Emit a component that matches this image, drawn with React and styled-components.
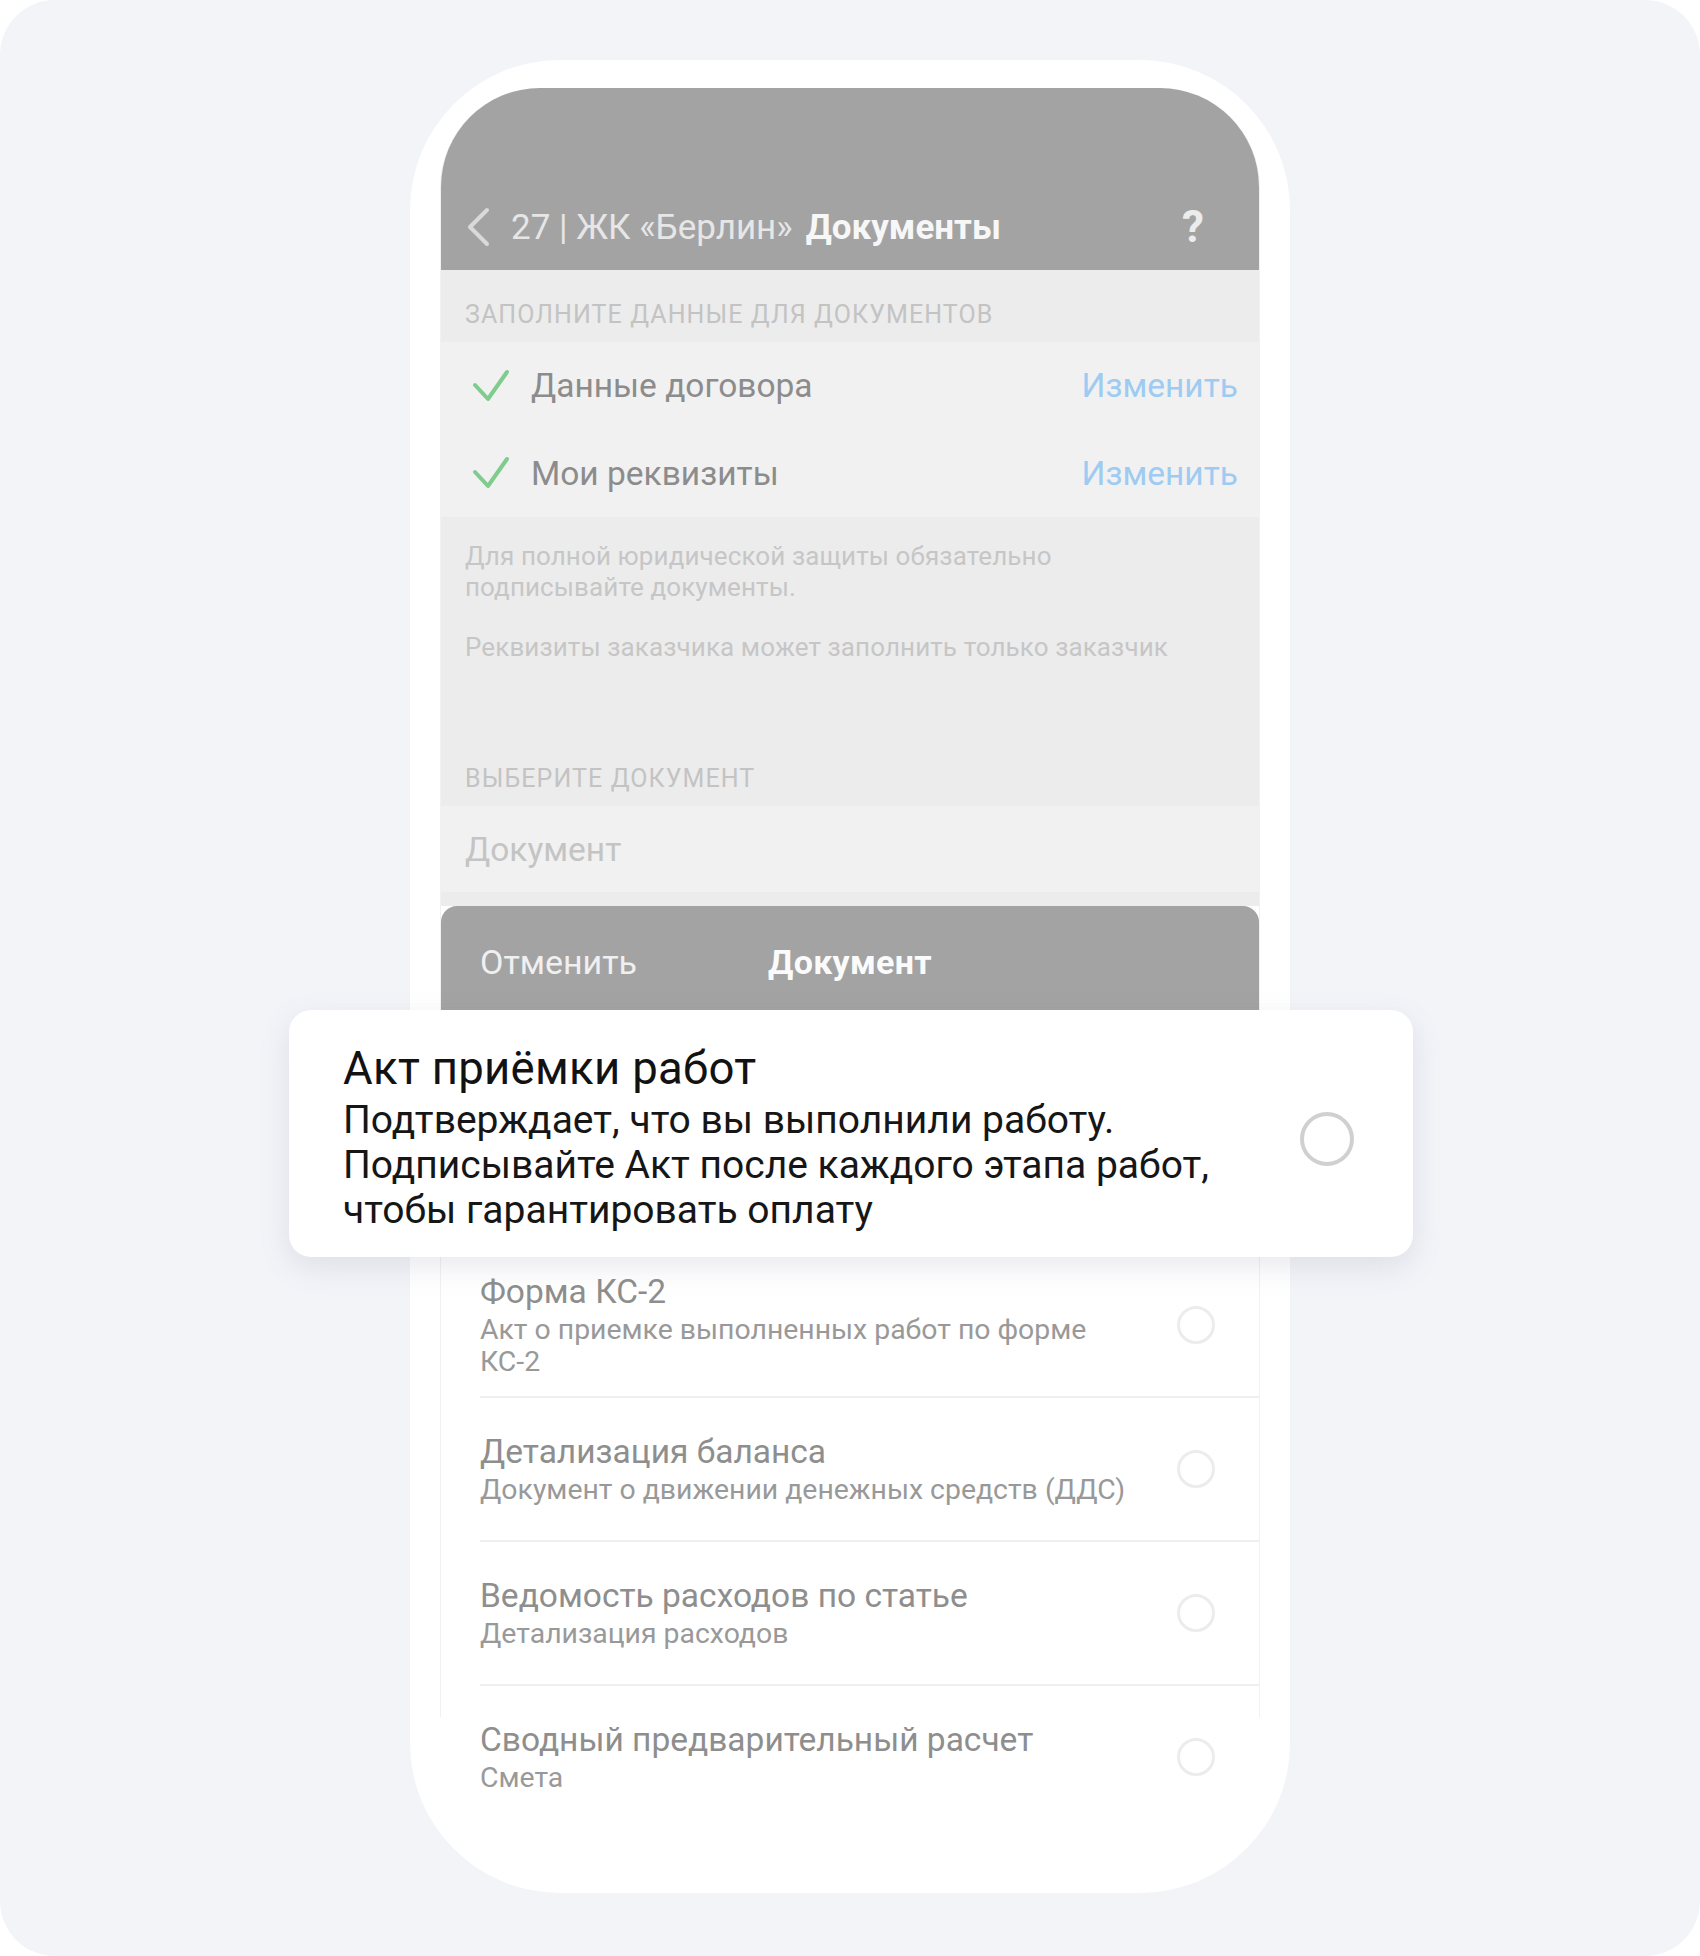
import React from 'react';
import styled, { createGlobalStyle } from 'styled-components';

const GlobalStyle = createGlobalStyle`
  html, body {
    margin: 0;
    padding: 0;
    background: #ffffff;
  }
  body {
    font-family: Roboto, "Noto Sans", sans-serif;
    -webkit-font-smoothing: antialiased;
  }
`;

const Page = styled.div`
  width: 1700px;
  height: 1956px;
  box-sizing: border-box;
  padding-top: 60px;
  background: #f3f4f8;
  border-radius: 55px;
`;

const Phone = styled.div`
  width: 880px;
  height: 1833px;
  margin: 0 auto;
  box-sizing: border-box;
  padding-top: 28px;
  background: #ffffff;
  border-radius: 150px;
`;

const Screen = styled.div`
  width: 820px;
  height: 1629px;
  margin: 0 auto;
  box-sizing: border-box;
  border: solid #f1f1f1;
  border-width: 0 1px;
  border-radius: 100px 100px 0 0;
`;

const Header = styled.div`
  height: 182px;
  display: flex;
  align-items: flex-end;
  background: #a3a3a3;
  border-radius: 99px 99px 0 0;
`;

const NavBar = styled.div`
  flex: 1;
  height: 86px;
  display: flex;
  align-items: center;
  padding: 0 55px 0 25px;
`;

const Crumb = styled.span`
  margin-left: 19px;
  font-size: 35px;
  color: #e6e6e6;
`;

const Title = styled.span`
  margin-left: 13px;
  font-size: 35px;
  font-weight: 700;
  color: #f7f7f7;
`;

const Help = styled.span`
  margin-left: auto;
  font-size: 44px;
  font-weight: 700;
  color: #ececec;
`;

const Form = styled.div`
  background: #ececec;
  padding-bottom: 14px;
`;

const SectionLabel = styled.div`
  height: 72px;
  box-sizing: border-box;
  display: flex;
  align-items: flex-end;
  padding: 0 24px 12px;
  font-size: 25px;
  line-height: 30px;
  letter-spacing: 1.1px;
  color: #c3c3c3;
`;

const FieldRow = styled.div`
  height: 87.5px;
  display: flex;
  align-items: center;
  padding: 0 21px 0 31px;
  background: #f1f1f1;
`;

const FieldLabel = styled.span`
  margin-left: 21px;
  font-size: 33.5px;
  color: #8c8c8c;
`;

const EditLink = styled.span`
  margin-left: auto;
  font-size: 33.5px;
  color: #9ecbf1;
`;

const Notes = styled.div`
  height: 217px;
  box-sizing: border-box;
  padding: 24px 24px 0;
  font-size: 26px;
  line-height: 31px;
  letter-spacing: 0.1px;
  color: #c6c6c6;
`;

const Note = styled.p`
  margin: 0;
  & + & {
    margin-top: 29px;
  }
`;

const InputBox = styled.div`
  height: 86px;
  display: flex;
  align-items: center;
  padding-left: 24px;
  background: #f1f1f1;
  font-size: 33.5px;
  color: #c4c4c4;
`;

const SheetBar = styled.div`
  height: 104px;
  box-sizing: border-box;
  display: grid;
  grid-template-columns: 1fr auto 1fr;
  align-items: center;
  padding: 8px 39px 0;
  background: #a3a3a3;
  border-radius: 16px 16px 0 0;
  font-size: 34px;
`;

const Cancel = styled.span`
  color: #f0f0f0;
`;

const SheetTitle = styled.span`
  font-weight: 700;
  letter-spacing: 0.3px;
  color: #fbfbfb;
`;

const FocusCard = styled.div`
  position: relative;
  z-index: 1;
  height: 247px;
  box-sizing: border-box;
  margin: 0 -154px -3px -152px;
  padding: 32px 59px 22px 54px;
  display: flex;
  align-items: center;
  background: #ffffff;
  border-radius: 22px;
  box-shadow: 0 10px 30px rgba(110, 120, 150, 0.16);
`;

const FocusTitle = styled.div`
  font-size: 45.5px;
  line-height: 50px;
  letter-spacing: 0.3px;
  color: #121212;
`;

const FocusText = styled.div`
  margin-top: 4px;
  font-size: 39px;
  line-height: 45px;
  color: #161616;
  white-space: nowrap;
`;

const Radio = styled.span`
  flex-shrink: 0;
  margin-left: auto;
  width: ${(p) => p.size}px;
  height: ${(p) => p.size}px;
  box-sizing: border-box;
  border-radius: 50%;
  border: ${(p) => p.stroke}px solid ${(p) => p.color};
`;

const DocRow = styled.div`
  height: 144px;
  box-sizing: border-box;
  margin-left: 39px;
  padding-right: 44px;
  display: flex;
  align-items: center;
  border-bottom: 2px solid ${(p) => (p.last ? 'transparent' : '#efefef')};
`;

const DocTitle = styled.div`
  font-size: 33.5px;
  line-height: 40px;
  color: #8e8e8e;
`;

const DocSub = styled.div`
  margin-top: 2px;
  font-size: 28.4px;
  line-height: 32px;
  color: #999999;
  white-space: nowrap;
`;

const Chevron = () => (
  <svg width="26" height="40" viewBox="0 0 26 40" fill="none">
    <path d="M21 3 L4 20 L21 37" stroke="#d9d9d9" strokeWidth="4" strokeLinecap="round" strokeLinejoin="round" />
  </svg>
);

const Check = () => (
  <svg width="38" height="34" viewBox="0 0 38 34" fill="none">
    <path d="M3 16 L16 30 L35 3" stroke="#7fcc8e" strokeWidth="4" strokeLinecap="round" strokeLinejoin="round" />
  </svg>
);

const docs = [
  { title: 'Форма КС-2', sub: ['Акт о приемке выполненных работ по форме', 'КС-2'] },
  { title: 'Детализация баланса', sub: ['Документ о движении денежных средств (ДДС)'] },
  { title: 'Ведомость расходов по статье', sub: ['Детализация расходов'] },
  { title: 'Сводный предварительный расчет', sub: ['Смета'] },
];

export default function App() {
  return (
    <>
      <GlobalStyle />
      <Page>
        <Phone>
          <Screen>
            <Header>
              <NavBar>
                <Chevron />
                <Crumb>27 | ЖК «Берлин»</Crumb>
                <Title>Документы</Title>
                <Help>?</Help>
              </NavBar>
            </Header>

            <Form>
              <SectionLabel>ЗАПОЛНИТЕ ДАННЫЕ ДЛЯ ДОКУМЕНТОВ</SectionLabel>
              <FieldRow>
                <Check />
                <FieldLabel>Данные договора</FieldLabel>
                <EditLink>Изменить</EditLink>
              </FieldRow>
              <FieldRow>
                <Check />
                <FieldLabel>Мои реквизиты</FieldLabel>
                <EditLink>Изменить</EditLink>
              </FieldRow>
              <Notes>
                <Note>
                  Для полной юридической защиты обязательно
                  <br />
                  подписывайте документы.
                </Note>
                <Note>Реквизиты заказчика может заполнить только заказчик</Note>
              </Notes>
              <SectionLabel>ВЫБЕРИТЕ ДОКУМЕНТ</SectionLabel>
              <InputBox>Документ</InputBox>
            </Form>

            <SheetBar>
              <Cancel>Отменить</Cancel>
              <SheetTitle>Документ</SheetTitle>
            </SheetBar>

            <FocusCard>
              <div>
                <FocusTitle>Акт приёмки работ</FocusTitle>
                <FocusText>
                  Подтверждает, что вы выполнили работу.
                  <br />
                  Подписывайте Акт после каждого этапа работ,
                  <br />
                  чтобы гарантировать оплату
                </FocusText>
              </div>
              <Radio size={54} stroke={4} color="#d0d0d0" />
            </FocusCard>

            {docs.map((d, i) => (
              <DocRow key={d.title} last={i === docs.length - 1}>
                <div>
                  <DocTitle>{d.title}</DocTitle>
                  <DocSub>
                    {d.sub.map((line, j) => (
                      <div key={j}>{line}</div>
                    ))}
                  </DocSub>
                </div>
                <Radio size={38} stroke={3} color="#ececec" />
              </DocRow>
            ))}
          </Screen>
        </Phone>
      </Page>
    </>
  );
}
